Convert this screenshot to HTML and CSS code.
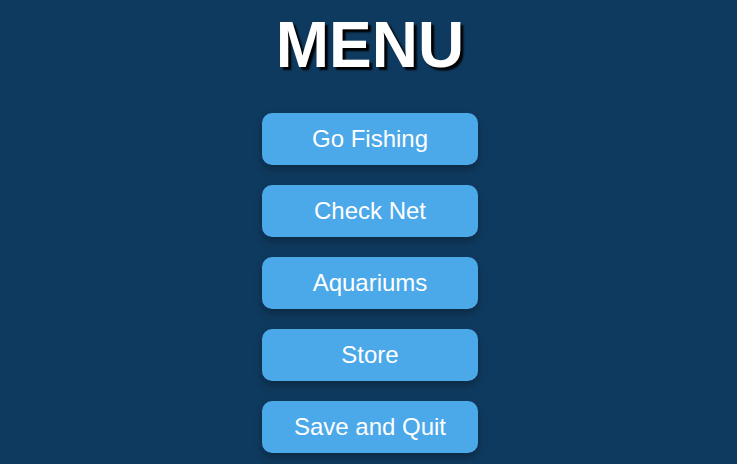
FILE: index.html
```html
<!DOCTYPE html>
<html>
<head>
<meta charset="utf-8">
<link rel="stylesheet" href="styles.css">
</head>
<body>
<main class="menu">
  <h1 class="title">MENU</h1>
  <nav class="buttons">
    <button class="btn">Go Fishing</button>
    <button class="btn">Check Net</button>
    <button class="btn">Aquariums</button>
    <button class="btn">Store</button>
    <button class="btn">Save and Quit</button>
  </nav>
</main>
</body>
</html>
```
FILE: styles.css
```css
html, body {
  margin: 0;
  padding: 0;
  background: #0f3a5f;
  height: 100%;
  overflow: hidden;
}
body {
  font-family: "Liberation Sans", Arial, sans-serif;
}
.menu {
  display: flex;
  flex-direction: column;
  align-items: center;
  padding-top: 8px;
  padding-left: 3px;
}
.title {
  margin: 0;
  font-size: 64px;
  font-weight: bold;
  color: #ffffff;
  line-height: 74px;
  text-shadow: 3px 3px 2px #000000;
}
.buttons {
  display: flex;
  flex-direction: column;
  gap: 20px;
  margin-top: 31px;
}
.btn {
  width: 216px;
  height: 52px;
  border: none;
  border-radius: 10px;
  background: #4ba8e9;
  color: #ffffff;
  font-family: "Liberation Sans", Arial, sans-serif;
  font-size: 24px;
  box-shadow: 0 4px 8px rgba(0, 0, 0, 0.3);
  padding: 0;
}
```
